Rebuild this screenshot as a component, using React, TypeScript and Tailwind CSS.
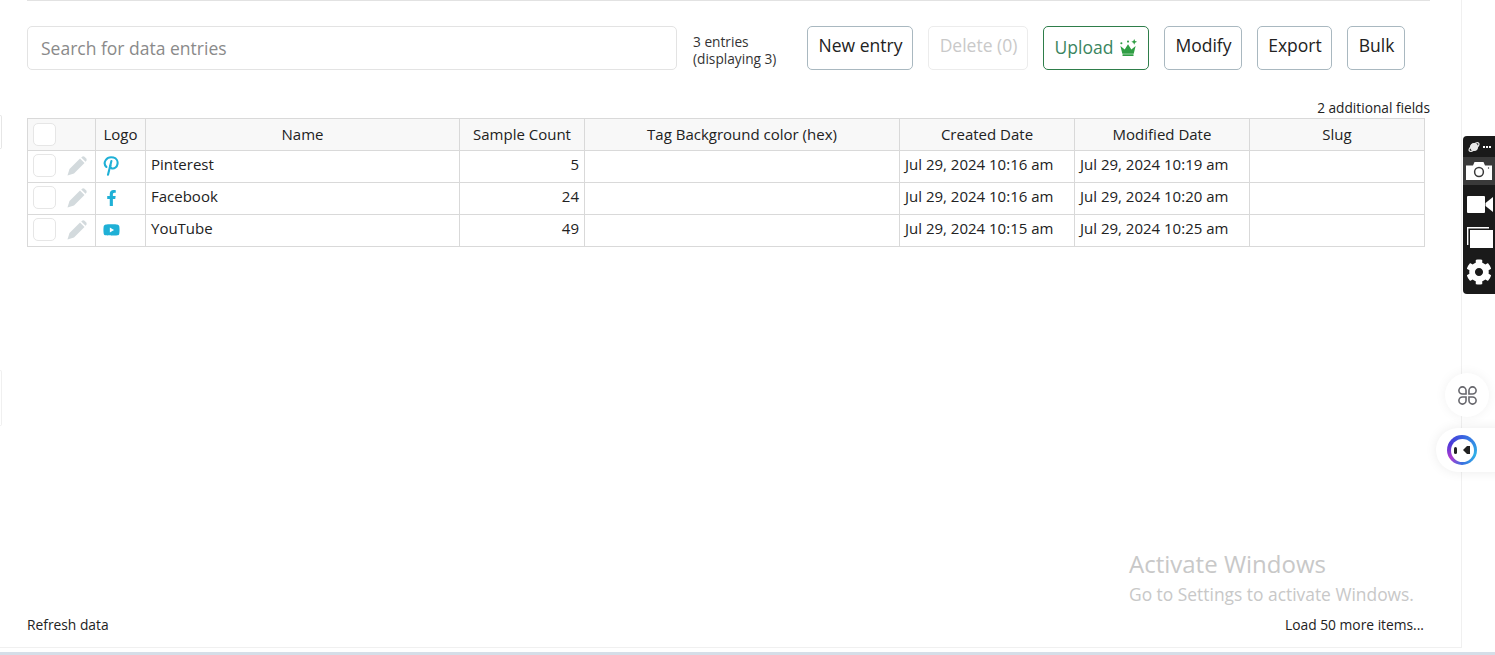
import { FaFacebookF, FaYoutube, FaCog } from "react-icons/fa";
import type { ReactNode } from "react";

const columns = [
  { label: "Logo", width: "w-[50px]" },
  { label: "Name", width: "w-[314px]" },
  { label: "Sample Count", width: "w-[125px]" },
  { label: "Tag Background color (hex)", width: "w-[315px]" },
  { label: "Created Date", width: "w-[175px]" },
  { label: "Modified Date", width: "w-[175px]" },
  { label: "Slug", width: "w-[175px]" },
];

function PinterestLogo() {
  return (
    <svg viewBox="0 0 16 20" className="h-[20px] w-[16px]" fill="none" stroke="#1fb0d6" strokeWidth="2.1" strokeLinecap="round">
      <path d="M3.4 11 C1.4 9 1.4 6 2.8 4 C4.5 1.6 8 1 10.5 1.6 C13.5 2.3 15 5 14.5 8 C14 11 11.5 13 9 12.4 C7.6 12 7 11 7.4 9.6" />
      <path d="M8.4 5 L5 18.8" />
    </svg>
  );
}

const rows: { name: string; count: number; created: string; modified: string; logo: ReactNode }[] = [
  {
    name: "Pinterest",
    count: 5,
    created: "Jul 29, 2024 10:16 am",
    modified: "Jul 29, 2024 10:19 am",
    logo: <PinterestLogo />,
  },
  {
    name: "Facebook",
    count: 24,
    created: "Jul 29, 2024 10:16 am",
    modified: "Jul 29, 2024 10:20 am",
    logo: <FaFacebookF className="h-[16px] w-[15px] text-[#1fb0d6]" />,
  },
  {
    name: "YouTube",
    count: 49,
    created: "Jul 29, 2024 10:15 am",
    modified: "Jul 29, 2024 10:25 am",
    logo: <FaYoutube className="h-[18px] w-[17px] text-[#1fb0d6]" />,
  },
];

function Checkbox() {
  return <span className="block h-[23px] w-[23px] rounded-[5px] border border-[#e6e6e6] bg-white" />;
}

function PencilIcon() {
  return (
    <svg viewBox="0 0 20 20" className="ml-[11px] h-[20px] w-[20px]" fill="#d3dadd">
      <path d="M0.5 19.5 L2.5 13 L13 2.5 L17.5 7 L7 17.5 Z" />
      <path d="M14.2 1.4 L15.5 0.5 Q16.5 0 17.5 0.8 L19.2 2.5 Q20 3.5 19.5 4.5 L18.6 5.8 Z" />
    </svg>
  );
}

function ToolButton({ children, className }: { children: ReactNode; className: string }) {
  return (
    <button className={`flex h-[44px] items-center justify-center rounded-[5px] border bg-white pb-[6px] pl-[1px] text-[17.5px] ${className}`}>
      {children}
    </button>
  );
}

function CrownIcon() {
  return (
    <svg viewBox="0 0 20 18" className="mt-[5px] h-[19px] w-[19px]" fill="#2f9e44">
      <path d="M1.5 7.5 L6 11 L9.5 5.5 L13 11 L17.5 7.5 L15.5 15.6 H3.5 Z" />
      <rect x="3.6" y="16" width="11.8" height="2" rx="0.5" />
      <path d="M16 0 L16.9 2.1 L19 3 L16.9 3.9 L16 6 L15.1 3.9 L13 3 L15.1 2.1 Z" />
      <circle cx="2.5" cy="4.5" r="1.1" />
      <circle cx="9.5" cy="2.8" r="1.1" />
    </svg>
  );
}

export default function App() {
  return (
    <div className="relative flex h-[655px] w-[1495px] flex-col overflow-hidden bg-white font-['Open_Sans',sans-serif] text-[#222]">
      <div className="flex h-[648px] w-[1462px] flex-col border-r border-b border-[#f0f0f0] pl-[27px]">
        <div className="h-px w-[1403px] bg-[#e2e2e2]" />

        <div className="mt-[25px] flex h-[44px] items-start">
          <div className="flex h-[44px] w-[650px] items-center rounded-[5px] border border-[#e3e3e3] pl-[13px] text-[17.5px] text-[#8a8a8a]">
            Search for data entries
          </div>
          <div className="ml-[16px] mt-[7px] w-[114px] text-[13.7px] leading-[17px] text-[#333]">
            3 entries
            <br />
            (displaying 3)
          </div>
          <ToolButton className="w-[106px] border-[#a9b8c0] text-[#222]">New entry</ToolButton>
          <ToolButton className="ml-[15px] w-[100px] border-[#ececec] text-[#c9c9c9]">Delete (0)</ToolButton>
          <ToolButton className="ml-[15px] w-[106px] gap-[6px] border-[#2e7d4a] text-[#3a8560]">
            <span className="mt-[4px]">Upload</span>
            <CrownIcon />
          </ToolButton>
          <ToolButton className="ml-[15px] w-[78px] border-[#a9b8c0] text-[#222]">Modify</ToolButton>
          <ToolButton className="ml-[15px] w-[75px] border-[#a9b8c0] text-[#222]">Export</ToolButton>
          <ToolButton className="ml-[15px] w-[58px] border-[#a9b8c0] text-[#222]">Bulk</ToolButton>
        </div>

        <div className="mt-[28px] h-[20px] w-[1403px] text-right text-[13.7px] leading-[19px]">2 additional fields</div>

        <table className="w-[1397px] table-fixed border-collapse text-[15px] leading-[20px]">
          <thead>
            <tr className="h-[32px] bg-[#f8f8f8]">
              <th className="w-[68px] border border-[#d9d9d9] pl-[5px] font-normal">
                <Checkbox />
              </th>
              {columns.map((col) => (
                <th key={col.label} className={`${col.width} border border-[#d9d9d9] p-0 pb-[2px] text-center font-normal`}>
                  {col.label}
                </th>
              ))}
            </tr>
          </thead>
          <tbody>
            {rows.map((row) => (
              <tr key={row.name} className="h-[32px]">
                <td className="border border-[#d9d9d9] pb-[2px] pl-[5px]">
                  <div className="flex items-center">
                    <Checkbox />
                    <PencilIcon />
                  </div>
                </td>
                <td className="border border-[#d9d9d9] pb-[1px] pl-[6px]">
                  <div className="flex w-[18px] justify-center">{row.logo}</div>
                </td>
                <td className="border border-[#d9d9d9] px-[5px] pb-[5px]">{row.name}</td>
                <td className="border border-[#d9d9d9] px-[5px] pb-[5px] text-right">{row.count}</td>
                <td className="border border-[#d9d9d9] px-[5px]" />
                <td className="whitespace-nowrap border border-[#d9d9d9] px-[5px] pb-[5px]">{row.created}</td>
                <td className="whitespace-nowrap border border-[#d9d9d9] px-[5px] pb-[5px]">{row.modified}</td>
                <td className="border border-[#d9d9d9] px-[5px]" />
              </tr>
            ))}
          </tbody>
        </table>

        <div className="mt-auto mb-[12px] flex w-[1397px] justify-between text-[13.8px] leading-[20px]">
          <span>Refresh data</span>
          <span>Load 50 more items...</span>
        </div>
      </div>
      <div className="mt-[4px] h-[3px] bg-[#d5dee8]" />

      {/* stubs of a panel cut off at the left edge */}
      <div className="absolute left-0 top-[115px] h-[34px] w-[2px] rounded-r-[3px] border border-l-0 border-[#e6e6e6]" />
      <div className="absolute left-0 top-[370px] h-[56px] w-[2px] rounded-r-[3px] border border-l-0 border-[#f0f0f0]" />

      {/* Windows watermark */}
      <div className="pointer-events-none absolute left-[1129px] top-[547px] text-[#c8c8c8]">
        <div className="text-[24px] leading-[33px]">Activate Windows</div>
        <div className="mt-[2px] text-[17.4px] leading-[24px]">Go to Settings to activate Windows.</div>
      </div>

      {/* capture extension bar */}
      <div className="absolute left-[1463px] top-[136px] flex h-[158px] w-[32px] flex-col items-center rounded-l-[4px] bg-[#1a1a1a]">
        <div className="flex h-[21px] w-full items-center gap-[3px] pl-[5px]">
          <svg viewBox="0 0 12 12" className="h-[12px] w-[12px]" fill="none" stroke="#e8e8e8" strokeWidth="1.3">
            <circle cx="6" cy="6" r="3.4" fill="#e8e8e8" />
            <ellipse cx="6" cy="6" rx="6" ry="2.4" transform="rotate(-40 6 6)" />
          </svg>
          <span className="flex gap-[1px]">
            <i className="h-[2px] w-[2px] bg-white" />
            <i className="h-[2px] w-[2px] bg-white" />
            <i className="h-[2px] w-[2px] bg-white" />
          </span>
        </div>
        <div className="flex h-[28px] w-full items-center justify-center bg-[#3a3a3a] pr-[1px]">
          <svg viewBox="0 0 26 18" className="h-[18px] w-[26px]">
            <path fill="white" d="M0 3.5 H7 L8.5 0 H17.5 L19 3.5 H26 V18 H0 Z" />
            <circle cx="13" cy="10" r="4.4" fill="none" stroke="#3a3a3a" strokeWidth="1.5" />
            <circle cx="22.5" cy="6" r="0.7" fill="#3a3a3a" />
          </svg>
        </div>
        <div className="mt-[3px] flex h-[33px] w-full items-center pl-[4px]">
          <svg viewBox="0 0 26 17" className="h-[17px] w-[26px]" fill="white">
            <rect x="0" y="0" width="18" height="17" rx="1" />
            <path d="M18.5 7 L26 1 V16 L18.5 10 Z" />
          </svg>
        </div>
        <div className="flex h-[33px] w-full items-center pl-[4px]">
          <svg viewBox="0 0 26 21" className="h-[21px] w-[26px]" fill="white">
            <path d="M0 18 V0 H22 V1.4 H1.4 V18 Z" />
            <rect x="3" y="3" width="23" height="18" />
          </svg>
        </div>
        <div className="flex h-[36px] w-full items-center pl-[3px]">
          <FaCog className="h-[26px] w-[26px] text-white" />
        </div>
      </div>

      {/* floating assistant buttons */}
      <div className="absolute left-[1445px] top-[373px] flex h-[44px] w-[44px] items-center justify-center rounded-full bg-white shadow-[0_0_12px_rgba(0,0,0,0.06)]">
        <svg viewBox="0 0 20 20" className="h-[21px] w-[21px]" fill="none" stroke="#66666c" strokeWidth="1.5">
          <path d="M8.6 8.6 H5.2 A3.4 3.4 0 1 1 8.6 5.2 Z" />
          <path d="M11.4 8.6 H14.8 A3.4 3.4 0 1 0 11.4 5.2 Z" />
          <path d="M8.6 11.4 H5.2 A3.4 3.4 0 1 0 8.6 14.8 Z" />
          <path d="M11.4 11.4 H14.8 A3.4 3.4 0 1 1 11.4 14.8 Z" />
        </svg>
      </div>
      <div className="absolute left-[1436px] top-[428px] flex h-[44px] w-[70px] items-center rounded-l-[22px] bg-white pl-[11px] shadow-[0_0_12px_rgba(0,0,0,0.08)]">
        <div className="flex h-[30px] w-[30px] items-center justify-center rounded-full bg-[conic-gradient(#3a60e0,#2fb0e8_110deg,#3a70e0_180deg,#b03ad0_235deg,#4a3ad8_300deg,#3a60e0)]">
          <div className="flex h-[23px] w-[23px] items-center justify-center gap-[6px] rounded-full bg-white">
            <span className="h-[7px] w-[3px] rounded-full bg-[#222]" />
            <svg viewBox="0 0 7 8" className="h-[8px] w-[7px]" fill="#222">
              <path d="M7 0 L7 8 L4 8 L0 4 L4 0 Z" />
            </svg>
          </div>
        </div>
      </div>
    </div>
  );
}
